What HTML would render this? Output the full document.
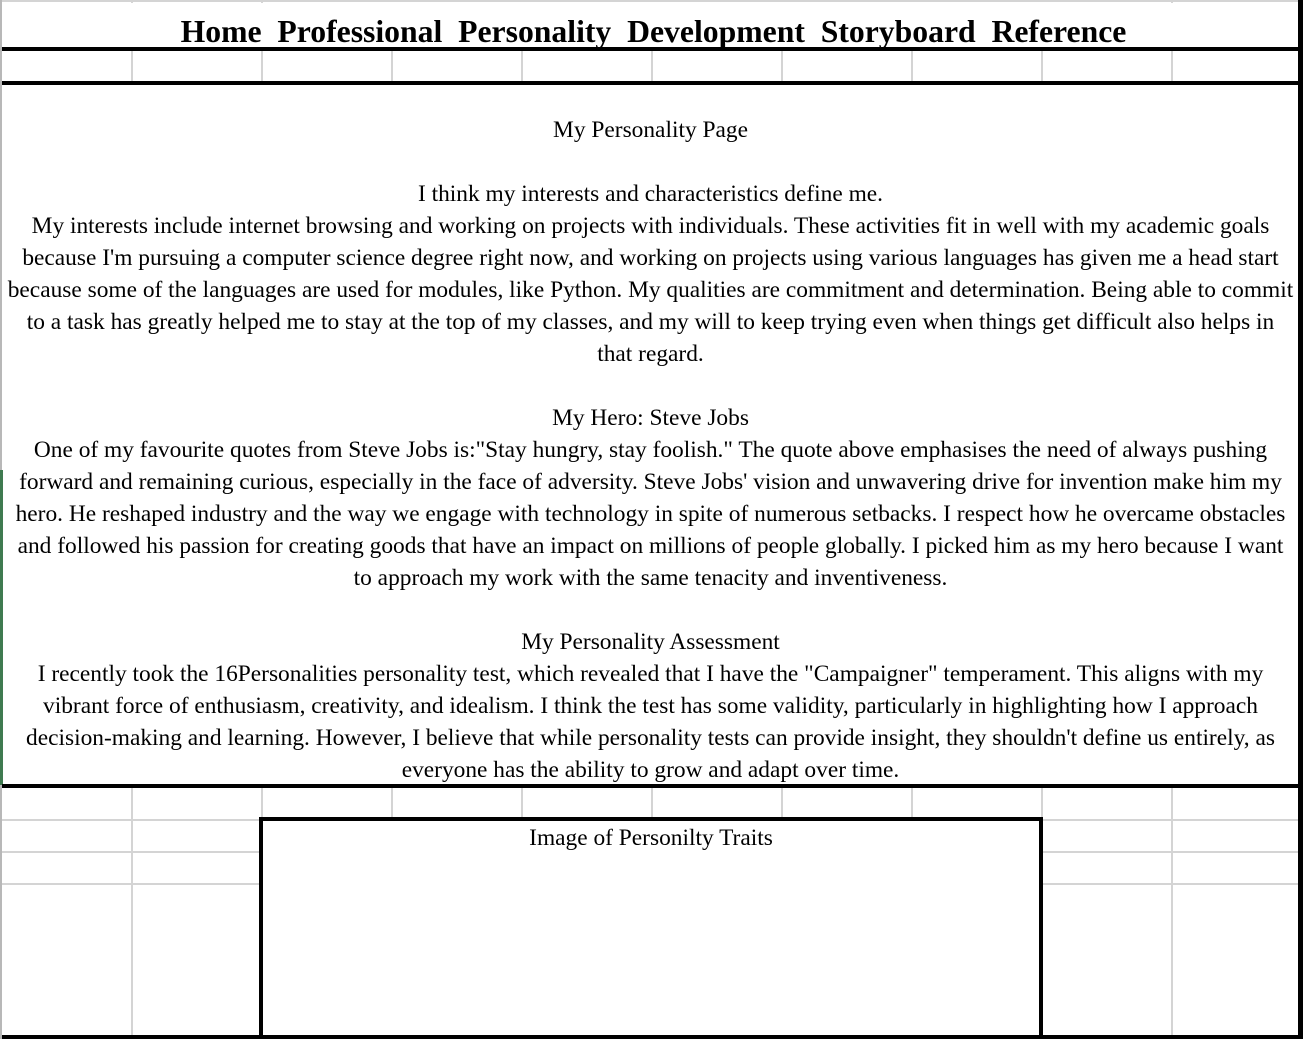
<!DOCTYPE html>
<html><head><meta charset="utf-8"><style>
html,body{margin:0;padding:0;background:#fff;}
body{width:1303px;height:1039px;position:relative;overflow:hidden;font-family:"Liberation Serif","Times New Roman",serif;color:#000;}
.a{position:absolute;}
.g{background:#d4d4d4;}
.k{background:#000;}
.t{position:absolute;left:3px;width:1295px;text-align:center;white-space:nowrap;font-size:23.4px;line-height:32px;}
</style></head><body>
<div class="a g" style="left:0;top:0;width:1303px;height:2px"></div>
<div class="a" style="left:0;top:0;width:2px;height:1039px;background:#b8b8b8"></div>
<div class="a" style="left:0;top:470px;width:3px;height:315px;background:#3f7a50"></div>
<div class="a k" style="left:2px;top:47px;width:1301px;height:4px"></div>
<div class="a k" style="left:2px;top:81px;width:1301px;height:4px"></div>
<div class="a k" style="left:2px;top:784px;width:1301px;height:4px"></div>
<div class="a k" style="left:2px;top:1035px;width:1301px;height:4px"></div>
<div class="a k" style="left:1298px;top:0;width:5px;height:1039px"></div>
<div class="a g" style="left:131px;top:51px;width:2px;height:30px"></div>
<div class="a g" style="left:261px;top:51px;width:2px;height:30px"></div>
<div class="a g" style="left:391px;top:51px;width:2px;height:30px"></div>
<div class="a g" style="left:521px;top:51px;width:2px;height:30px"></div>
<div class="a g" style="left:651px;top:51px;width:2px;height:30px"></div>
<div class="a g" style="left:781px;top:51px;width:2px;height:30px"></div>
<div class="a g" style="left:911px;top:51px;width:2px;height:30px"></div>
<div class="a g" style="left:1041px;top:51px;width:2px;height:30px"></div>
<div class="a g" style="left:1171px;top:51px;width:2px;height:30px"></div>
<div class="a g" style="left:131px;top:0;width:2px;height:3px"></div>
<div class="a g" style="left:261px;top:0;width:2px;height:3px"></div>
<div class="a g" style="left:1171px;top:0;width:2px;height:3px"></div>
<div class="a g" style="left:131px;top:788px;width:2px;height:247px"></div>
<div class="a g" style="left:261px;top:788px;width:2px;height:30px"></div>
<div class="a g" style="left:391px;top:788px;width:2px;height:30px"></div>
<div class="a g" style="left:521px;top:788px;width:2px;height:30px"></div>
<div class="a g" style="left:651px;top:788px;width:2px;height:30px"></div>
<div class="a g" style="left:781px;top:788px;width:2px;height:30px"></div>
<div class="a g" style="left:911px;top:788px;width:2px;height:30px"></div>
<div class="a g" style="left:1041px;top:788px;width:2px;height:30px"></div>
<div class="a g" style="left:1171px;top:788px;width:2px;height:247px"></div>
<div class="a g" style="left:2px;top:819px;width:258px;height:2px"></div>
<div class="a g" style="left:2px;top:851px;width:258px;height:2px"></div>
<div class="a g" style="left:2px;top:883px;width:258px;height:2px"></div>
<div class="a g" style="left:1043px;top:819px;width:255px;height:2px"></div>
<div class="a g" style="left:1043px;top:851px;width:255px;height:2px"></div>
<div class="a g" style="left:1043px;top:883px;width:255px;height:2px"></div>
<div class="a" style="left:259px;top:817px;width:776px;height:218px;border:4px solid #000;border-bottom:none"></div>
<div class="a" style="left:263px;top:822px;width:776px;text-align:center;font-size:23.4px;line-height:32px;white-space:nowrap">Image of Personilty Traits</div>
<div class="a" style="left:2px;top:12px;width:1303px;text-align:center;font-weight:bold;font-size:31.7px;line-height:40px;white-space:nowrap">Home&nbsp; Professional&nbsp; Personality&nbsp; Development&nbsp; Storyboard&nbsp; Reference</div>
<div class="t" style="top:114px">My Personality Page</div>
<div class="t" style="top:178px">I think my interests and characteristics define me.</div>
<div class="t" style="top:210px">My interests include internet browsing and working on projects with individuals. These activities fit in well with my academic goals</div>
<div class="t" style="top:242px">because I'm pursuing a computer science degree right now, and working on projects using various languages has given me a head start</div>
<div class="t" style="top:274px">because some of the languages are used for modules, like Python. My qualities are commitment and determination. Being able to commit</div>
<div class="t" style="top:306px">to a task has greatly helped me to stay at the top of my classes, and my will to keep trying even when things get difficult also helps in</div>
<div class="t" style="top:338px">that regard.</div>
<div class="t" style="top:402px">My Hero: Steve Jobs</div>
<div class="t" style="top:434px">One of my favourite quotes from Steve Jobs is:"Stay hungry, stay foolish." The quote above emphasises the need of always pushing</div>
<div class="t" style="top:466px">forward and remaining curious, especially in the face of adversity. Steve Jobs' vision and unwavering drive for invention make him my</div>
<div class="t" style="top:498px">hero. He reshaped industry and the way we engage with technology in spite of numerous setbacks. I respect how he overcame obstacles</div>
<div class="t" style="top:530px">and followed his passion for creating goods that have an impact on millions of people globally. I picked him as my hero because I want</div>
<div class="t" style="top:562px">to approach my work with the same tenacity and inventiveness.</div>
<div class="t" style="top:626px">My Personality Assessment</div>
<div class="t" style="top:658px">I recently took the 16Personalities personality test, which revealed that I have the "Campaigner" temperament. This aligns with my</div>
<div class="t" style="top:690px">vibrant force of enthusiasm, creativity, and idealism. I think the test has some validity, particularly in highlighting how I approach</div>
<div class="t" style="top:722px">decision-making and learning. However, I believe that while personality tests can provide insight, they shouldn't define us entirely, as</div>
<div class="t" style="top:754px">everyone has the ability to grow and adapt over time.</div>
</body></html>
